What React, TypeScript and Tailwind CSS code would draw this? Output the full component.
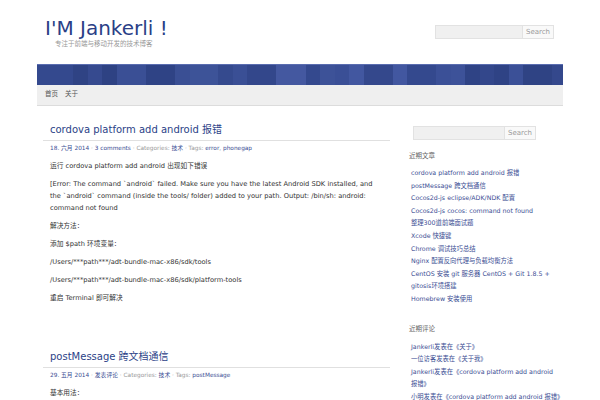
const font = { fontFamily: '"DejaVu Sans", "Noto Sans CJK SC", sans-serif' };

const mosaic: [number, string][] = [
  [36, '#34498e'], [15, '#2f4384'], [14, '#364a8f'], [15, '#2e4283'], [29, '#3a4f95'],
  [29, '#2f4385'], [15, '#3a4f94'], [28, '#3d5398'], [15, '#354a8e'], [14, '#3a4f95'],
  [29, '#33478b'], [30, '#4458a0'], [14, '#34498e'], [15, '#3d5298'], [14, '#3a4f96'],
  [15, '#4257a0'], [29, '#34488c'], [14, '#4257a0'], [29, '#34498e'], [15, '#3b5097'],
  [14, '#3d5299'], [15, '#2f4385'], [14, '#33478b'], [15, '#2f4385'], [14, '#3b5097'],
  [29, '#2f4384'], [11, '#34488c'],
];

const recent = [
  'cordova platform add android 报错',
  'postMessage 跨文档通信',
  'Cocos2d-js eclipse/ADK/NDK 配置',
  'Cocos2d-js cocos: command not found',
  '整理300道前端面试题',
  'Xcode 快捷键',
  'Chrome 调试技巧总结',
  'Nginx 配置反向代理与负载均衡方法',
  'CentOS 安装 git 服务器 CentOS + Git 1.8.5 + gitosis环境搭建',
  'Homebrew 安装使用',
];

const comments = [
  'Jankerli发表在《关于》',
  '一位访客发表在《关于我》',
  'Jankerli发表在《cordova platform add android 报错》',
  '小明发表在《cordova platform add android 报错》',
];

function SearchBox({ inputW }: { inputW: string }) {
  return (
    <div className="flex h-[14px]">
      <div className={`${inputW} h-full bg-[#f0f0f0] border border-[#e2e2e2]`} />
      <div className="h-full px-[3px] flex items-center bg-[#f9f9f9] border border-l-0 border-[#e2e2e2] text-[7px] text-[#999]">
        Search
      </div>
    </div>
  );
}

function Post({
  title,
  meta,
  children,
}: {
  title: string;
  meta: React.ReactNode;
  children: React.ReactNode;
}) {
  return (
    <article>
      <h2 className="px-[7px] pb-[3px] text-[10px] leading-[14px] text-[#2b3f87] border-b border-[#e0e0e0]">
        {title}
      </h2>
      <div className="px-[7px] pt-[3px] text-[5.8px] leading-[9px] text-[#999]">{meta}</div>
      <div className="px-[7px] pt-[7px] flex flex-col gap-[6px] text-[6.7px] leading-[12px] text-[#333]">
        {children}
      </div>
    </article>
  );
}

const L = ({ children }: { children: React.ReactNode }) => (
  <span className="text-[#3a4d93]">{children}</span>
);

export default function App() {
  return (
    <div className="bg-white w-[600px] h-[400px] overflow-hidden" style={font}>
      <div className="mx-auto w-[526px]">
        <header className="flex justify-between items-start h-[64px]">
          <div className="pl-2 pt-[16px]">
            <h1 className="text-[20px] leading-[24px] text-[#2b3f87]">I'M Jankerli !</h1>
            <p className="pl-[10px] text-[6.5px] leading-[9px] text-[#999]">专注于前端与移动开发的技术博客</p>
          </div>
          <div className="pt-[25px] pr-[9px]">
            <SearchBox inputW="w-[88px]" />
          </div>
        </header>

        <div className="flex h-[21px] border-t border-[#5a6db0]">
          {mosaic.map(([w, c], i) => (
            <div key={i} className="h-full" style={{ width: w, background: c }} />
          ))}
        </div>
        <nav className="h-[21px] bg-[#efefef] border-b border-[#dcdcdc] flex items-center gap-[7px] px-2 text-[6.5px] text-[#555]">
          <span>首页</span>
          <span>关于</span>
        </nav>

        <div className="flex pt-[17px]">
          <main className="ml-[6px] w-[347px] flex flex-col gap-[46px]">
            <Post
              title="cordova platform add android 报错"
              meta={
                <>
                  <L>18. 六月 2014</L> · <L>3 comments</L> · Categories: <L>技术</L> · Tags:{' '}
                  <L>error</L>, <L>phonegap</L>
                </>
              }
            >
              <p>运行 cordova platform add android 出现如下错误</p>
              <p>
                [Error: The command `android` failed. Make sure you have the latest Android SDK installed, and the
                `android` command (inside the tools/ folder) added to your path. Output: /bin/sh: android: command not
                found
              </p>
              <p>解决方法：</p>
              <p>添加 $path 环境变量：</p>
              <p>/Users/***path***/adt-bundle-mac-x86/sdk/tools</p>
              <p>/Users/***path***/adt-bundle-mac-x86/sdk/platform-tools</p>
              <p>重启 Terminal 即可解决</p>
            </Post>
            <Post
              title="postMessage 跨文档通信"
              meta={
                <>
                  <L>29. 五月 2014</L> · <L>发表评论</L> · Categories: <L>技术</L> · Tags: <L>postMessage</L>
                </>
              }
            >
              <p>基本用法：</p>
            </Post>
          </main>

          <aside className="ml-[19px] w-[152px] pt-[3px]">
            <div className="pl-[4px]">
              <SearchBox inputW="w-[92px]" />
            </div>
            <h3 className="mt-[11px] text-[6.5px] leading-[10px] text-[#666]">近期文章</h3>
            <ul className="mt-[6px] pl-[2px] text-[6.3px] leading-[12.6px] text-[#3a4d93]">
              {recent.map((r) => (
                <li key={r}>{r}</li>
              ))}
            </ul>
            <h3 className="mt-[18px] text-[6.5px] leading-[10px] text-[#666]">近期评论</h3>
            <ul className="mt-[7px] pl-[2px] text-[6.3px] leading-[12.6px] text-[#3a4d93]">
              {comments.map((c) => (
                <li key={c}>{c}</li>
              ))}
            </ul>
          </aside>
        </div>
      </div>
    </div>
  );
}
